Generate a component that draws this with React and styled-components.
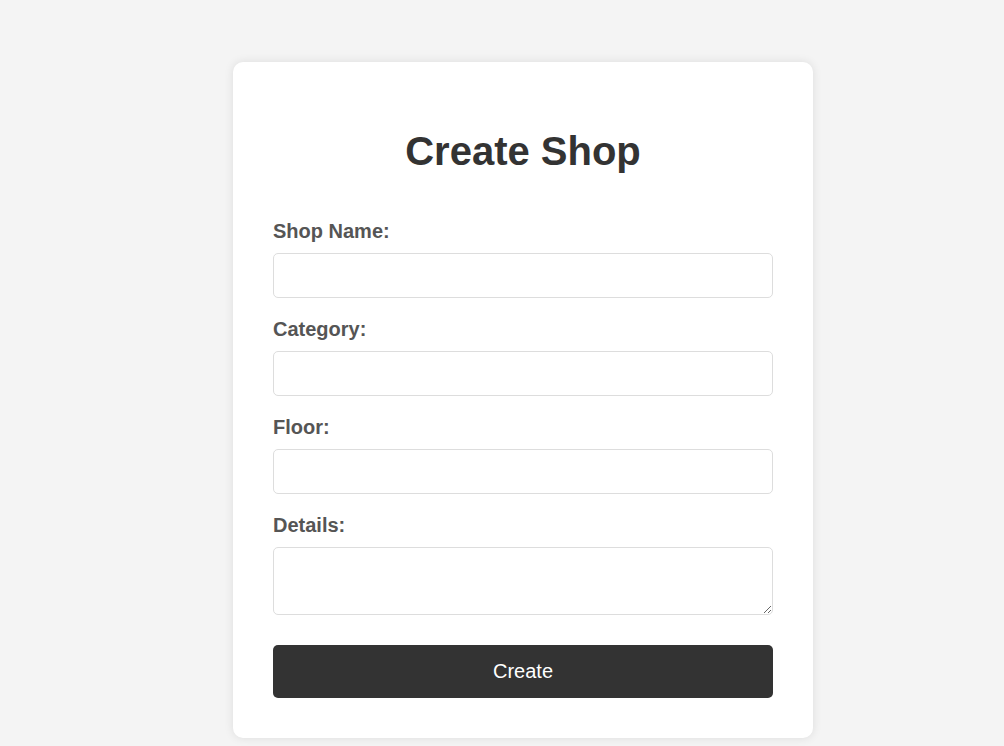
import styled, { createGlobalStyle } from "styled-components";

const GlobalStyle = createGlobalStyle`
  html, body {
    margin: 0;
    padding: 0;
    background: #f4f4f4;
    font-family: "Liberation Sans", Arial, sans-serif;
  }
`;

const Page = styled.main`
  min-height: 746px;
  padding: 62px 0 0 233px;
  box-sizing: border-box;
`;

const Card = styled.section`
  width: 580px;
  box-sizing: border-box;
  padding: 40px;
  background: #fff;
  border-radius: 10px;
  box-shadow: 0 0 10px rgba(0, 0, 0, 0.1);
`;

const Heading = styled.h1`
  margin: 26px 0 46px;
  font-size: 40px;
  line-height: 46px;
  text-align: center;
  color: #333;
`;

const ShopForm = styled.form`
  display: flex;
  flex-direction: column;
`;

const Field = styled.div`
  display: flex;
  flex-direction: column;
  margin-bottom: ${(props) => (props.last ? "30px" : "20px")};
`;

const Label = styled.label`
  display: block;
  font-size: 20px;
  line-height: 23px;
  font-weight: bold;
  color: #555;
  margin-bottom: 10px;
`;

const Input = styled.input`
  height: 45px;
  box-sizing: border-box;
  padding: 10px;
  font-size: 16px;
  font-family: inherit;
  border: 1px solid #ddd;
  border-radius: 5px;
  &:focus {
    outline: 1px solid #333;
  }
`;

const TextBox = styled.textarea`
  height: 68px;
  box-sizing: border-box;
  padding: 10px;
  font-size: 16px;
  font-family: inherit;
  border: 1px solid #ddd;
  border-radius: 5px;
`;

const SubmitButton = styled.button`
  height: 53px;
  border: none;
  border-radius: 5px;
  background: #333;
  color: #fff;
  font-size: 20px;
  font-family: inherit;
  cursor: pointer;
  &:hover {
    background: #222;
  }
`;

const App = () => {
  function handleSubmit(event) {
    event.preventDefault();
  }

  return (
    <Page>
      <GlobalStyle />
      <Card>
        <Heading>Create Shop</Heading>
        <ShopForm onSubmit={handleSubmit}>
          <Field>
            <Label htmlFor="name">Shop Name:</Label>
            <Input id="name" name="name" />
          </Field>
          <Field>
            <Label htmlFor="category">Category:</Label>
            <Input id="category" name="category" />
          </Field>
          <Field>
            <Label htmlFor="floor">Floor:</Label>
            <Input id="floor" name="floor" />
          </Field>
          <Field last>
            <Label htmlFor="details">Details:</Label>
            <TextBox id="details" name="details" />
          </Field>
          <SubmitButton type="submit">Create</SubmitButton>
        </ShopForm>
      </Card>
    </Page>
  );
};

export default App;
